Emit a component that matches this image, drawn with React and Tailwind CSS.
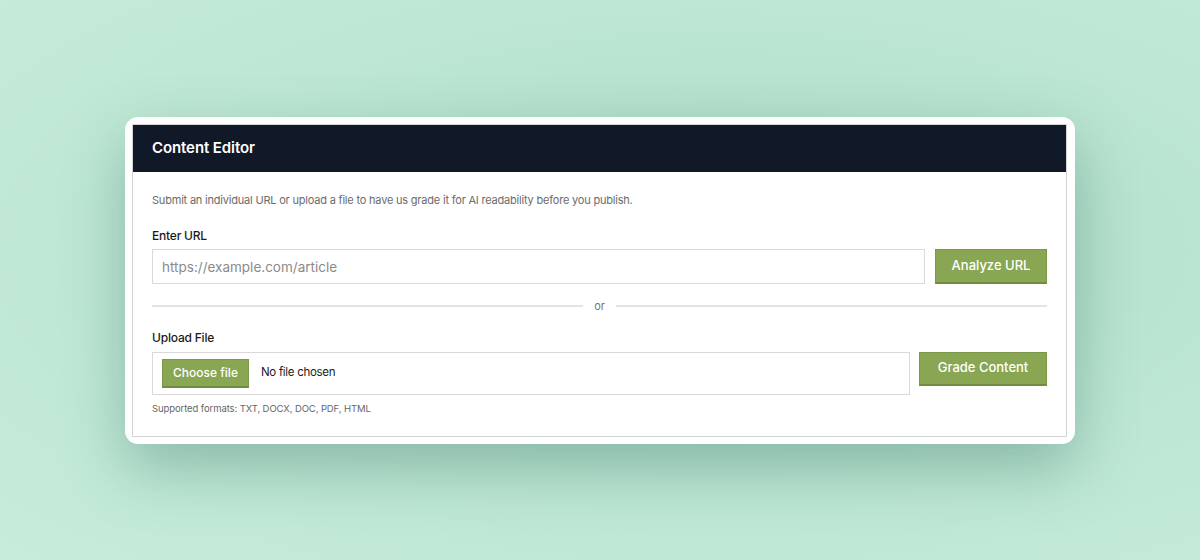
import React from "react";

const font = { fontFamily: "Inter, 'Liberation Sans', sans-serif" };

function GreenButton({ children, className = "" }) {
  return (
    <button
      className={`bg-[#89a653] text-white border border-[#7b9848] border-b-2 border-b-[#6f8c3f] font-medium ${className}`}
    >
      {children}
    </button>
  );
}

export default function App() {
  return (
    <div
      className="w-[1200px] h-[560px] flex items-start justify-center pt-[117px] bg-[radial-gradient(ellipse_at_60%_45%,#a9d8c4_0%,#bde7d3_55%,#c6ecda_100%)]"
      style={font}
    >
      <div className="w-[950px] bg-white rounded-[13px] p-[7px] pr-[8px] shadow-[0_24px_60px_rgba(40,100,90,0.35)]">
        <div className="border border-[#d4d4d4]">
          <div className="bg-[#111827] h-[47px] flex items-center px-[19px]">
            <h1 className="text-white text-[15px] font-semibold tracking-[-0.1px]">
              Content Editor
            </h1>
          </div>

          <div className="px-[19px] pt-[20px] pb-[20px]">
            <p className="text-[11px] tracking-[-0.2px] text-[#6b6b6b] leading-[16px]">
              Submit an individual URL or upload a file to have us grade it for AI readability before you publish.
            </p>

            <label className="block mt-[20px] text-[12px] font-medium text-[#1a1a1a] leading-[16px] tracking-[-0.2px]">
              Enter URL
            </label>
            <div className="flex gap-[10px] mt-[5px]">
              <input
                type="text"
                placeholder="https://example.com/article"
                className="flex-1 h-[35px] border border-[#d9d9d9] px-[9px] text-[13.5px] text-[#333] placeholder:text-[#8a8a8a] outline-none"
              />
              <GreenButton className="w-[112px] h-[35px] text-[13px]">
                Analyze URL
              </GreenButton>
            </div>

            <div className="flex items-center gap-[11px] mt-[14px]">
              <div className="flex-1 h-[2px] bg-[#e4e4e4]" />
              <span className="text-[11px] text-[#777]">or</span>
              <div className="flex-1 h-[2px] bg-[#e4e4e4]" />
            </div>

            <label className="block mt-[15px] text-[12px] font-medium text-[#1a1a1a] leading-[16px] tracking-[-0.2px]">
              Upload File
            </label>
            <div className="flex items-start gap-[9px] mt-[6px]">
              <div className="flex-1 h-[43px] border border-[#d9d9d9] flex items-center px-[9px]">
                <GreenButton className="w-[87px] h-[29px] text-[12px] border-b">
                  Choose file
                </GreenButton>
                <span className="ml-[12px] text-[11.5px] tracking-[-0.3px] text-[#1a1a1a]">
                  No file chosen
                </span>
              </div>
              <GreenButton className="w-[128px] h-[34px] text-[13px]">
                Grade Content
              </GreenButton>
            </div>
            <p className="mt-[7px] text-[9.5px] tracking-[-0.1px] text-[#666] leading-[14px]">
              Supported formats: TXT, DOCX, DOC, PDF, HTML
            </p>
          </div>
        </div>
      </div>
    </div>
  );
}
